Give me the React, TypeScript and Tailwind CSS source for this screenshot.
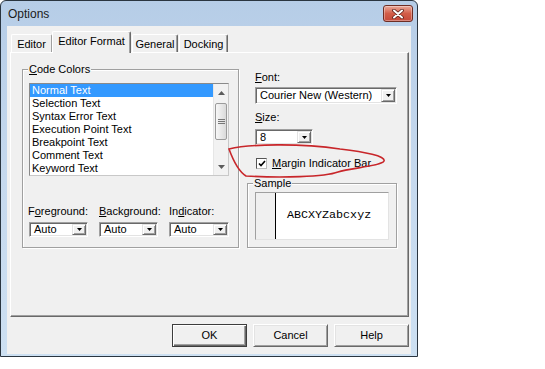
import React from 'react';

const ITEMS = [
  'Normal Text',
  'Selection Text',
  'Syntax Error Text',
  'Execution Point Text',
  'Breakpoint Text',
  'Comment Text',
  'Keyword Text',
];

/** Small black arrow used in the classic combo buttons. */
function DownArrow() {
  return (
    <svg width="5" height="3" viewBox="0 0 5 3">
      <polygon points="0,0 5,0 2.5,3" fill="#000" />
    </svg>
  );
}

/** VB-classic sunken combo box with a raised drop button. */
function Combo({ value, className }: { value: string; className: string }) {
  return (
    <div
      className={`flex items-stretch bg-white border border-t-[#a0a0a0] border-l-[#a0a0a0] border-b-white border-r-white shadow-[inset_1px_1px_0_#696969,inset_-1px_-1px_0_#e3e3e3] p-[1px] ${className}`}
    >
      <span className="flex-1 pl-[3px] text-[11px] leading-none flex items-center text-black">{value}</span>
      <span className="w-[14px] flex items-center justify-center bg-[#f0f0f0] border border-t-[#e3e3e3] border-l-[#e3e3e3] border-b-[#696969] border-r-[#696969] shadow-[inset_1px_1px_0_#fff,inset_-1px_-1px_0_#a0a0a0]">
        <DownArrow />
      </span>
    </div>
  );
}

/** Etched group frame with a caption sitting on its top edge. */
function GroupBox({ label, className, children }: { label: React.ReactNode; className: string; children?: React.ReactNode }) {
  return (
    <div
      className={`relative border border-[#a0a0a0] shadow-[1px_1px_0_#fff,inset_1px_1px_0_#fff] ${className}`}
    >
      <span className="absolute -top-[7px] left-[5px] bg-[#f0f0f0] px-[1px] text-[11px] leading-[13px] text-black">
        {label}
      </span>
      {children}
    </div>
  );
}

function Btn({ label, isDefault }: { label: string; isDefault?: boolean }) {
  return (
    <div
      className={`w-[75px] h-[23px] flex items-center justify-center bg-[#f0f0f0] text-[11px] text-black border ${
        isDefault
          ? 'border-[#3c3c3c] shadow-[inset_1px_1px_0_#fff,inset_-1px_-1px_0_#696969,inset_-2px_-2px_0_#a0a0a0]'
          : 'border-t-white border-l-white border-b-[#696969] border-r-[#696969] shadow-[inset_1px_1px_0_#e3e3e3,inset_-1px_-1px_0_#a0a0a0]'
      }`}
    >
      {label}
    </div>
  );
}

export default function App() {
  return (
    <div className="relative w-[545px] h-[369px] bg-white font-['Liberation_Sans',Arial,sans-serif] text-black">
      {/* window frame */}
      <div className="w-[418px] h-[357px] flex flex-col rounded-t-[6px] border border-[#2a3540] bg-gradient-to-b from-[#b6cde7] via-[#c6d9ee] to-[#cde0f2] px-[6px] pb-[2px]">
        {/* title bar */}
        <div className="h-[25px] flex items-start justify-between">
          <span className="mt-[5px] pl-[1px] text-[12px] leading-[16px] text-[#1b1b1b]">Options</span>
          <div className="mt-[4px] -mr-[2px] w-[30px] h-[17px] rounded-[3px] border border-[#6e2d24] bg-gradient-to-b from-[#e9a99b] via-[#d25d48] to-[#c5493a] shadow-[inset_0_0_0_1px_rgba(255,255,255,0.35)] flex items-center justify-center">
            <svg width="12" height="10" viewBox="0 0 12 10">
              <path d="M2 1.5 L10 8.5 M10 1.5 L2 8.5" stroke="#5a1f18" strokeWidth="3.6" strokeLinecap="round" />
              <path d="M2 1.5 L10 8.5 M10 1.5 L2 8.5" stroke="#fff" strokeWidth="2" strokeLinecap="round" />
            </svg>
          </div>
        </div>

        {/* client area */}
        <div className="flex-1 bg-[#f0f0f0] pt-[5px] pl-[3px]">
          {/* tabs */}
          <div className="h-[21px] flex items-end">
            <div className="ml-[1px] w-[41px] h-[18px] rounded-t-[2px] border-t border-l border-t-white border-l-white border-r border-r-[#a0a0a0] pt-[3px] text-center text-[11px] leading-[13px]">
              Editor
            </div>
            <div className="relative z-10 -mb-[1px] w-[79px] h-[22px] rounded-t-[2px] bg-[#f0f0f0] border-t border-l border-t-white border-l-white border-r border-r-[#696969] shadow-[inset_-1px_0_0_#a0a0a0] pt-[3px] text-center text-[11px] leading-[13px]">
              Editor Format
            </div>
            <div className="ml-[1px] w-[46px] h-[18px] rounded-t-[2px] border-t border-l border-t-white border-l-white border-r border-r-[#696969] shadow-[inset_-1px_0_0_#a0a0a0] pt-[3px] text-center text-[11px] leading-[13px]">
              General
            </div>
            <div className="ml-[1px] w-[49px] h-[18px] rounded-t-[2px] border-t border-l border-t-white border-l-white border-r border-r-[#696969] shadow-[inset_-1px_0_0_#a0a0a0] pt-[3px] text-center text-[11px] leading-[13px]">
              Docking
            </div>
          </div>

          {/* tab page */}
          <div className="w-[399px] h-[265px] flex border border-t-white border-l-white border-b-[#696969] border-r-[#696969] shadow-[inset_-1px_-1px_0_#a0a0a0] pl-[11px] pt-[16px]">
            {/* code colors */}
            <GroupBox
              label={
                <>
                  <u>C</u>ode Colors
                </>
              }
              className="w-[217px] h-[179px] pl-[6px] pt-[13px]"
            >
              <div className="w-[200px] h-[93px] flex bg-white border border-t-[#8a8a8a] border-l-[#8a8a8a] border-b-[#c8c8c8] border-r-[#c8c8c8]">
                <div className="flex-1 flex flex-col">
                  {ITEMS.map((item, i) => (
                    <div
                      key={item}
                      className={`h-[13px] pl-[2px] text-[11px] leading-[13px] whitespace-nowrap ${
                        i === 0 ? 'bg-[#3399ff] text-white' : 'text-black'
                      }`}
                    >
                      {item}
                    </div>
                  ))}
                </div>
                {/* scrollbar */}
                <div className="w-[15px] flex flex-col bg-[#f2f2f2] border-l border-[#e6e6e6]">
                  <div className="h-[17px] flex items-center justify-center">
                    <svg width="7" height="4" viewBox="0 0 7 4">
                      <polygon points="0,4 7,4 3.5,0" fill="#5c5c5c" />
                    </svg>
                  </div>
                  <div className="flex-1 px-[1px]">
                    <div className="mt-[2px] h-[37px] rounded-[2px] border border-[#9b9b9b] bg-gradient-to-r from-[#f7f7f7] to-[#dadada] flex flex-col items-center justify-center gap-[1px]">
                      <span className="w-[7px] h-px bg-[#777]" />
                      <span className="w-[7px] h-px bg-[#777]" />
                      <span className="w-[7px] h-px bg-[#777]" />
                    </div>
                  </div>
                  <div className="h-[17px] flex items-center justify-center">
                    <svg width="7" height="4" viewBox="0 0 7 4">
                      <polygon points="0,0 7,0 3.5,4" fill="#5c5c5c" />
                    </svg>
                  </div>
                </div>
              </div>

              <div className="mt-[29px] -ml-[1px] flex">
                <div className="w-[71px] flex flex-col">
                  <span className="text-[11px] leading-[13px]">
                    F<u>o</u>reground:
                  </span>
                  <Combo value="Auto" className="mt-[4px] ml-[1px] w-[59px] h-[15px]" />
                </div>
                <div className="w-[70px] flex flex-col">
                  <span className="text-[11px] leading-[13px]">
                    <u>B</u>ackground:
                  </span>
                  <Combo value="Auto" className="mt-[4px] w-[59px] h-[15px]" />
                </div>
                <div className="w-[61px] flex flex-col">
                  <span className="text-[11px] leading-[13px]">
                    In<u>d</u>icator:
                  </span>
                  <Combo value="Auto" className="mt-[4px] w-[60px] h-[15px]" />
                </div>
              </div>
            </GroupBox>

            {/* font / size / sample */}
            <div className="ml-[8px] w-[150px] flex flex-col">
              <span className="ml-[8px] mt-[2px] text-[11px] leading-[13px]">
                <u>F</u>ont:
              </span>
              <Combo value="Courier New (Western)" className="ml-[8px] mt-[3px] w-[142px] h-[17px]" />
              <span className="ml-[8px] mt-[7px] text-[11px] leading-[13px]">
                <u>S</u>ize:
              </span>
              <Combo value="8" className="ml-[8px] mt-[5px] w-[58px] h-[16px]" />
              <div className="ml-[9px] mt-[12px] h-[13px] flex items-center">
                <span className="w-[11px] h-[11px] bg-white border border-t-[#555] border-l-[#555] border-b-[#bbb] border-r-[#bbb] flex items-center justify-center">
                  <svg width="8" height="7" viewBox="0 0 8 7">
                    <path d="M1 3.5 L3 5.5 L7 1" stroke="#000" strokeWidth="1.6" fill="none" />
                  </svg>
                </span>
                <span className="ml-[5px] text-[11px] leading-[13px]">
                  <u>M</u>argin Indicator Bar
                </span>
              </div>
              <GroupBox label="Sample" className="mt-[13px] w-[150px] h-[65px] pl-[7px] pt-[8px]">
                <div className="w-[134px] h-[48px] flex bg-white border border-t-[#a0a0a0] border-l-[#a0a0a0] border-b-[#e3e3e3] border-r-[#e3e3e3]">
                  <div className="w-[20px] bg-[#f0f0f0] border-r border-black" />
                  <div className="flex-1 flex items-center pl-[11px] font-['Liberation_Mono','Courier_New',monospace] text-[11.7px] leading-none">
                    ABCXYZabcxyz
                  </div>
                </div>
              </GroupBox>
            </div>
          </div>

          {/* dialog buttons */}
          <div className="w-[399px] mt-[7px] flex justify-end gap-[6px]">
            <Btn label="OK" isDefault />
            <Btn label="Cancel" />
            <Btn label="Help" />
          </div>
        </div>
      </div>

      {/* hand-drawn red annotation */}
      <svg className="absolute inset-0 pointer-events-none" width="545" height="369" viewBox="0 0 545 369">
        <path
          d="M229 149 C 250 144, 300 143, 340 149 C 365 152, 386 156, 384 161 C 382 166, 350 168, 338 172 C 325 177, 280 178, 246 176 C 238 171, 233 160, 229 149 Z"
          fill="none"
          stroke="#c8262a"
          strokeWidth="1.6"
        />
      </svg>
    </div>
  );
}
